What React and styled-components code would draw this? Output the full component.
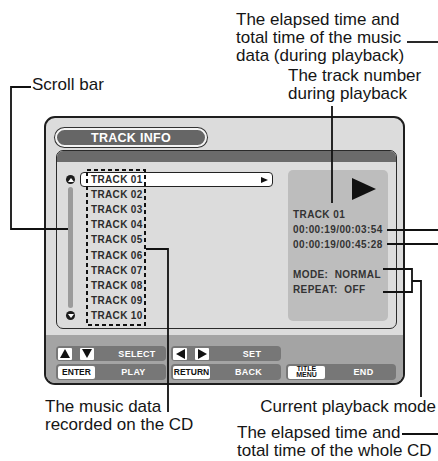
import React from 'react';
import styled, { createGlobalStyle } from 'styled-components';

const Global = createGlobalStyle`
  body {
    margin: 0;
    background: #fff;
    font-family: "Liberation Sans", Arial, sans-serif;
  }
`;

const Canvas = styled.div`
  position: relative;
  width: 438px;
  height: 461px;
  overflow: hidden;
  box-sizing: border-box;
  padding: 116px 0 0 44px;
  background: #fff;
`;

const Screen = styled.div`
  width: 361px;
  height: 269px;
  box-sizing: border-box;
  border: 2px solid #1e1e1e;
  border-radius: 11px;
  background: #dcdcdc;
  display: flex;
  flex-direction: column;
  overflow: hidden;
`;

const TitlePill = styled.div`
  margin: 10px 0 0 9px;
  width: 152px;
  height: 19px;
  box-sizing: border-box;
  border-radius: 10px;
  background: #666;
  border: 2px solid #f4f4f4;
  box-shadow: 0 0 0 1px #333;
  color: #fff;
  font-weight: bold;
  font-size: 12.5px;
  letter-spacing: 0.3px;
  display: flex;
  align-items: center;
  justify-content: center;
`;

const InnerPanel = styled.div`
  margin: 3px 0 0 10px;
  width: 341px;
  height: 179px;
  box-sizing: border-box;
  border: 1px solid #2a2a2a;
  border-radius: 7px;
  overflow: hidden;
  display: flex;
  flex-direction: column;
  background: #dcdcdc;
`;

const InnerHeader = styled.div`
  height: 11px;
  flex: none;
  background: #6b6b6b;
`;

const InnerBody = styled.div`
  flex: 1;
  display: flex;
  align-items: flex-start;
  padding: 10px 8px 0 9px;
`;

const ScrollColumn = styled.div`
  width: 9px;
  height: 151px;
  padding: 3px 0;
  box-sizing: border-box;
  display: flex;
  flex-direction: column;
  align-items: center;
`;

const ScrollButton = styled.div`
  width: 9px;
  height: 9px;
  border-radius: 50%;
  background: #1c1c1c;
  display: flex;
  align-items: center;
  justify-content: center;
  flex: none;
  &::after {
    content: '';
    border-left: 3px solid transparent;
    border-right: 3px solid transparent;
    ${(p) => (p.$down ? 'border-top: 4px solid #fff;' : 'border-bottom: 4px solid #fff;')}
  }
`;

const ScrollTrack = styled.div`
  flex: 1;
  width: 5px;
  margin: 3px 0;
  border-radius: 3px;
  background: #9b9b9b;
`;

const TrackList = styled.div`
  margin-left: 5px;
  display: flex;
  flex-direction: column;
`;

const TrackRow = styled.div`
  height: 15.1px;
  width: 193px;
  box-sizing: border-box;
  display: flex;
  align-items: center;
  padding-left: ${(p) => (p.$selected ? '10px' : '11px')};
  font-weight: bold;
  font-size: 10px;
  letter-spacing: 0.35px;
  color: #2c2c2c;
  background: ${(p) => (p.$selected ? '#fff' : 'transparent')};
  border: ${(p) => (p.$selected ? '1px solid #222' : 'none')};
  border-radius: 4px;
`;

const RowPlay = styled.span`
  margin-left: auto;
  margin-right: 4px;
  border-left: 7px solid #111;
  border-top: 3.5px solid transparent;
  border-bottom: 3.5px solid transparent;
`;

const InfoPanel = styled.div`
  margin: -2px 0 0 auto;
  width: 100px;
  height: 151px;
  box-sizing: border-box;
  border-radius: 5px;
  background: #bdbdbd;
  padding: 8px 12px 0 5px;
  display: flex;
  flex-direction: column;
`;

const BigPlay = styled.div`
  align-self: flex-end;
  border-left: 24px solid #111;
  border-top: 11px solid transparent;
  border-bottom: 11px solid transparent;
  margin-bottom: 6.5px;
`;

const InfoLine = styled.div`
  height: 15px;
  line-height: 15px;
  font-weight: bold;
  font-size: 10px;
  letter-spacing: 0.4px;
  color: #333;
  white-space: pre;
  margin-top: ${(p) => (p.$gap ? '15px' : '0')};
`;

const ButtonBar = styled.div`
  margin-top: auto;
  height: 48px;
  box-sizing: border-box;
  background: #a4a4a4;
  padding: 11px 7px 0 10px;
  display: grid;
  grid-template-columns: repeat(3, 110px);
  grid-template-rows: 15px 16px;
  column-gap: 5px;
  row-gap: 3px;
`;

const KeyGroup = styled.div`
  display: flex;
  align-items: center;
  background: #777;
  border-radius: 4px;
  padding-left: 2px;
`;

const ArrowKey = styled.div`
  width: 14px;
  height: 12px;
  margin-right: 8px;
  background: #fff;
  border-radius: 1px;
  display: flex;
  align-items: center;
  justify-content: center;
  &::after {
    content: '';
    ${(p) =>
      p.$dir === 'up' || p.$dir === 'down'
        ? `border-left: 5px solid transparent; border-right: 5px solid transparent; ${
            p.$dir === 'up' ? 'border-bottom' : 'border-top'
          }: 9px solid #111;`
        : `border-top: 5px solid transparent; border-bottom: 5px solid transparent; ${
            p.$dir === 'left' ? 'border-right' : 'border-left'
          }: 9px solid #111;`}
  }
`;

const TextKey = styled.div`
  width: 37px;
  height: 13px;
  background: #fff;
  border-radius: 2px;
  color: #111;
  font-weight: bold;
  font-size: ${(p) => (p.$small ? '7px' : '8.5px')};
  line-height: ${(p) => (p.$small ? '6.5px' : '13px')};
  text-align: center;
  display: flex;
  flex-direction: column;
  justify-content: center;
`;

const KeyLabel = styled.div`
  flex: 1;
  text-align: center;
  padding-left: 6px;
  color: #fff;
  font-weight: bold;
  font-size: 9px;
  letter-spacing: 0.3px;
`;

const Overlay = styled.svg`
  position: absolute;
  left: 0;
  top: 0;
  pointer-events: none;
`;

const Note = styled.div`
  position: absolute;
  top: ${(p) => p.$top}px;
  ${(p) => (p.$right !== undefined ? `right: ${p.$right}px;` : `left: ${p.$left}px;`)}
  font-size: 17px;
  line-height: 18px;
  color: #151515;
  white-space: nowrap;
`;

const tracks = Array.from({ length: 10 }, (_, i) => `TRACK ${String(i + 1).padStart(2, '0')}`);

export default function App() {
  return (
    <>
      <Global />
      <Canvas>
        <Screen>
          <TitlePill>TRACK INFO</TitlePill>
          <InnerPanel>
            <InnerHeader />
            <InnerBody>
              <ScrollColumn>
                <ScrollButton />
                <ScrollTrack />
                <ScrollButton $down />
              </ScrollColumn>
              <TrackList>
                {tracks.map((t, i) => (
                  <TrackRow key={t} $selected={i === 0}>
                    {t}
                    {i === 0 && <RowPlay />}
                  </TrackRow>
                ))}
              </TrackList>
              <InfoPanel>
                <BigPlay />
                <InfoLine>TRACK 01</InfoLine>
                <InfoLine>00:00:19/00:03:54</InfoLine>
                <InfoLine>00:00:19/00:45:28</InfoLine>
                <InfoLine $gap>{'MODE:  NORMAL'}</InfoLine>
                <InfoLine>{'REPEAT:  OFF'}</InfoLine>
              </InfoPanel>
            </InnerBody>
          </InnerPanel>
          <ButtonBar>
            <KeyGroup>
              <ArrowKey $dir="up" />
              <ArrowKey $dir="down" />
              <KeyLabel>SELECT</KeyLabel>
            </KeyGroup>
            <KeyGroup>
              <ArrowKey $dir="left" />
              <ArrowKey $dir="right" />
              <KeyLabel>SET</KeyLabel>
            </KeyGroup>
            <div />
            <KeyGroup>
              <TextKey>ENTER</TextKey>
              <KeyLabel>PLAY</KeyLabel>
            </KeyGroup>
            <KeyGroup>
              <TextKey>RETURN</TextKey>
              <KeyLabel>BACK</KeyLabel>
            </KeyGroup>
            <KeyGroup>
              <TextKey $small>
                <span>TITLE</span>
                <span>MENU</span>
              </TextKey>
              <KeyLabel>END</KeyLabel>
            </KeyGroup>
          </ButtonBar>
        </Screen>

        <Note $top={11} $left={236}>
          The elapsed time and
          <br />
          total time of the music
          <br />
          data (during playback)
        </Note>
        <Note $top={67} $left={288}>
          The track number
          <br />
          during playback
        </Note>
        <Note $top={76} $left={32}>Scroll bar</Note>
        <Note $top={398} $left={45}>
          The music data
          <br />
          recorded on the CD
        </Note>
        <Note $top={398} $right={2}>Current playback mode</Note>
        <Note $top={424} $left={237}>
          The elapsed time and
          <br />
          total time of the whole CD
        </Note>

        <Overlay width="438" height="461" viewBox="0 0 438 461">
          <g fill="none" stroke="#111" strokeWidth="1.8">
            <path d="M407 42H438" />
            <path d="M332 106V203" />
            <path d="M31 87H11V229H68" />
            <path d="M146 249H168V412" />
            <path d="M387 230H438" />
            <path d="M387 244H438" />
            <path d="M383 269H412V292H383" />
            <path d="M412 281H421V397" />
            <path d="M402 434H438" />
            <rect x="87" y="170" width="58" height="155" strokeWidth="2" strokeDasharray="4 3" />
          </g>
        </Overlay>
      </Canvas>
    </>
  );
}
